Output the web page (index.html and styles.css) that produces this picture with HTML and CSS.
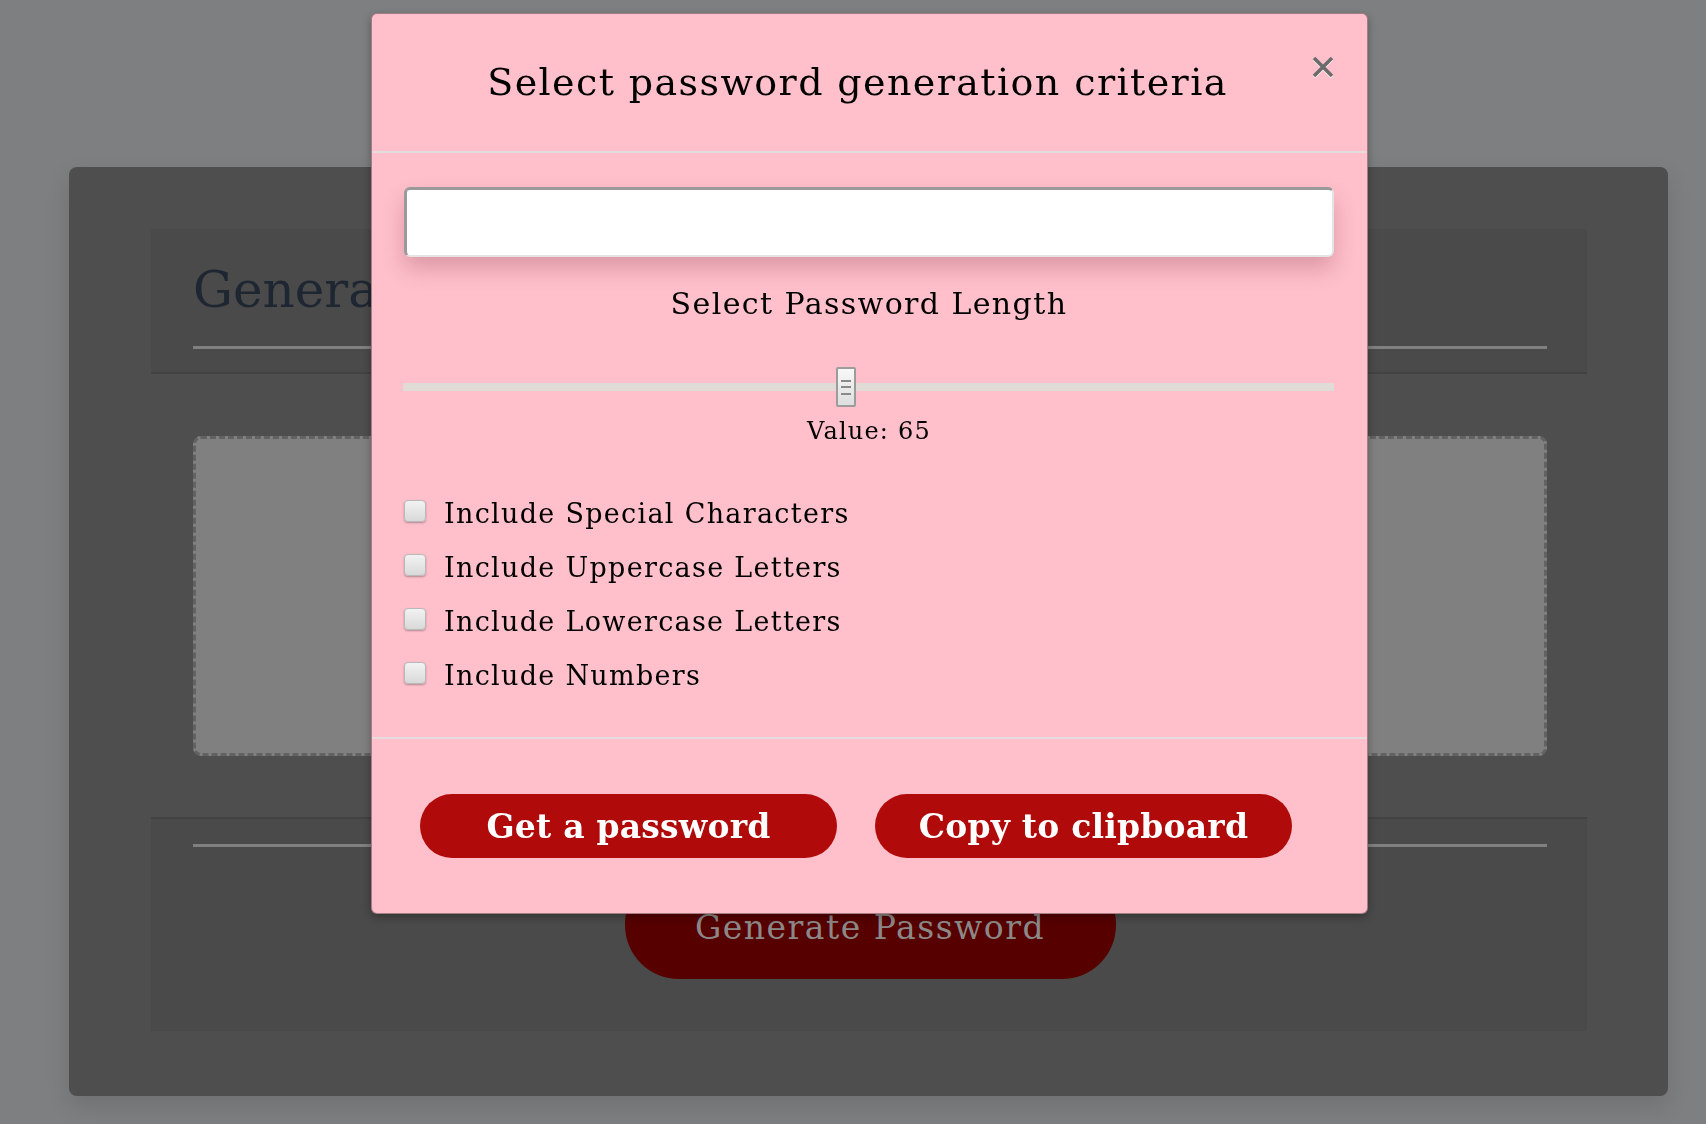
FILE: index.html
```html
<!DOCTYPE html>
<html lang="en">
<head>
<meta charset="utf-8">
<title>Password Generator</title>
<link rel="stylesheet" href="styles.css">
</head>
<body>
<div class="page">
  <div class="card">
    <div class="card-header">
      <h1 class="card-title">Generator</h1>
      <hr class="rule">
    </div>
    <div class="result-box"></div>
    <div class="card-footer">
      <hr class="rule">
      <button class="generate-btn" type="button">Generate Password</button>
    </div>
  </div>
</div>

<div class="overlay">
  <div class="modal">
    <div class="modal-header">
      <h2 class="modal-title">Select password generation criteria</h2>
      <span class="close" aria-label="Close">
        <svg width="24" height="24" viewBox="0 0 24 24"><path d="M3 3 L21 21 M21 3 L3 21" stroke="#6b6b6b" stroke-width="3.6" stroke-linecap="butt" fill="none"/></svg>
      </span>
    </div>
    <div class="modal-body">
      <input class="pw-output" type="text" readonly>
      <h3 class="length-title">Select Password Length</h3>
      <input class="range" type="range" min="8" max="128" value="65">
      <p class="value-text">Value: 65</p>
      <div class="options">
        <label class="option"><input class="check" type="checkbox"><span>Include Special Characters</span></label>
        <label class="option"><input class="check" type="checkbox"><span>Include Uppercase Letters</span></label>
        <label class="option"><input class="check" type="checkbox"><span>Include Lowercase Letters</span></label>
        <label class="option"><input class="check" type="checkbox"><span>Include Numbers</span></label>
      </div>
    </div>
    <div class="modal-footer">
      <button class="pill-btn" type="button">Get a password</button>
      <button class="pill-btn" type="button">Copy to clipboard</button>
    </div>
  </div>
</div>
</body>
</html>
```

FILE: styles.css
```css
* { box-sizing: border-box; }

html, body {
  margin: 0;
  padding: 0;
}

body {
  background: #7e7f81;
  font-family: "DejaVu Serif", "Liberation Serif", serif;
  height: 1124px;
  overflow: hidden;
}

.page {
  padding: 167px 38px 28px 69px;
}

.card {
  width: 1599px;
  background: #4e4e4e;
  border-radius: 8px;
  padding: 62px 81px 65px 82px;
  box-shadow: 0 10px 24px rgba(0, 0, 0, 0.12);
}

.card-header {
  background: #4a4a4a;
  padding: 31px 40px 23px 42px;
  border-bottom: 2px solid #424242;
}

.card-title {
  margin: 0;
  font-size: 50px;
  line-height: 60px;
  font-weight: normal;
  color: #1e2731;
  white-space: nowrap;
}

.rule {
  margin: 0;
  border: 0;
  height: 3px;
  background: #808080;
}

.card-header .rule {
  margin-top: 26px;
}

.result-box {
  margin: 62px 40px 0 42px;
  height: 320px;
  background: #808080;
  border: 3px dashed #626262;
  border-radius: 8px;
}

.card-footer {
  margin-top: 61px;
  background: #4a4a4a;
  border-top: 2px solid #424242;
  padding: 25px 40px 52px 42px;
  display: flex;
  flex-direction: column;
  align-items: center;
}

.card-footer .rule {
  align-self: stretch;
}

.generate-btn {
  margin-top: 23px;
  width: 491px;
  height: 109px;
  border: 0;
  border-radius: 54px;
  background: #570000;
  color: #8c8888;
  font-family: inherit;
  font-size: 33px;
  letter-spacing: 1.5px;
  padding: 6px 0 0;
}

/* Modal */
.overlay {
  position: fixed;
  inset: 0;
  padding: 13px 0 0 371px;
}

.modal {
  width: 997px;
  background: #ffc0cb;
  border: 1px solid rgba(0, 0, 0, 0.35);
  border-radius: 6px;
  box-shadow: 0 3px 9px rgba(0, 0, 0, 0.3);
}

.modal-header {
  display: flex;
  align-items: flex-start;
  padding: 45px 32px 46px 32px;
  border-bottom: 2px solid #e6dcdd;
}

.modal-title {
  flex: 1;
  margin: 0;
  text-align: center;
  font-size: 38px;
  line-height: 46px;
  font-weight: normal;
  letter-spacing: 1.4px;
  color: #000;
}

.close {
  width: 24px;
  height: 24px;
  margin-top: -4px;
  display: block;
}

.close svg {
  display: block;
  filter: drop-shadow(0 1px 0 rgba(255, 255, 255, 0.8));
}

.modal-body {
  padding: 34px 33px 34px 32px;
}

.pw-output {
  display: block;
  width: 100%;
  height: 70px;
  margin: 0;
  background: #fff;
  border-style: solid;
  border-width: 3px 2px 2px 3px;
  border-color: #999 #e4e4e4 #e4e4e4 #9a9a9a;
  border-radius: 6px;
  box-shadow: 0 12px 22px rgba(110, 30, 45, 0.24);
  font-family: inherit;
  font-size: 24px;
}

.length-title {
  margin: 29px 0 0;
  text-align: center;
  font-size: 30px;
  line-height: 36px;
  font-weight: normal;
  letter-spacing: 1.4px;
  color: #000;
}

.range {
  -webkit-appearance: none;
  appearance: none;
  display: block;
  width: 931px;
  height: 40px;
  margin: 45px 0 0 -1px;
  background: transparent;
}

.range::-webkit-slider-runnable-track {
  height: 8px;
  background: #e0dbd7;
  border: 0;
}

.range::-webkit-slider-thumb {
  -webkit-appearance: none;
  appearance: none;
  width: 20px;
  height: 40px;
  margin-top: -16px;
  border: 2px solid #9c9c9c;
  border-radius: 2px;
  background:
    linear-gradient(#8a8a8a, #8a8a8a) center 11px / 10px 2px no-repeat,
    linear-gradient(#8a8a8a, #8a8a8a) center 17px / 10px 2px no-repeat,
    linear-gradient(#8a8a8a, #8a8a8a) center 24px / 10px 2px no-repeat,
    linear-gradient(#f8f8f8, #dedede);
}

.value-text {
  margin: 10px 0 0;
  text-align: center;
  font-size: 24px;
  line-height: 29px;
  letter-spacing: 1.2px;
  color: #000;
}

.options {
  margin-top: 41px;
}

.option {
  display: flex;
  align-items: center;
  height: 54px;
  font-size: 27px;
  line-height: 54px;
  letter-spacing: 1.3px;
  color: #000;
}

.check {
  -webkit-appearance: none;
  appearance: none;
  width: 22px;
  height: 22px;
  margin: 0 18px 7px 0;
  border: 1px solid #b9b9b9;
  border-radius: 4px;
  background: linear-gradient(#f2f2f2, #d9d9d9);
  box-shadow: 0 1px 2px rgba(0, 0, 0, 0.3);
}

.modal-footer {
  display: flex;
  gap: 38px;
  padding: 55px 32px 55px 48px;
  border-top: 2px solid #e6dcdd;
}

.pill-btn {
  width: 417px;
  height: 64px;
  border: 0;
  border-radius: 32px;
  background: #b00a0a;
  color: #fff;
  font-family: inherit;
  font-size: 33px;
  font-weight: bold;
  letter-spacing: 0.2px;
  padding: 0;
}
```
